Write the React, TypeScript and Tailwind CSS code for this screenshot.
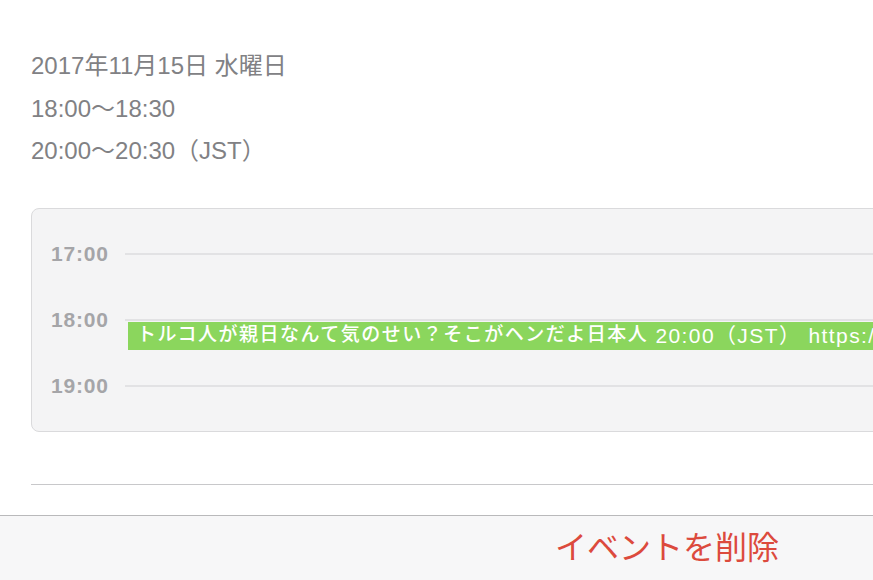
const font = { fontFamily: '"Liberation Sans", "Noto Sans CJK JP", sans-serif' };

const hours = ['17:00', '18:00', '19:00'];

function HourRow({ label }: { label: string }) {
  return (
    <div className="flex h-[66px] items-center">
      <span className="w-[93px] shrink-0 pl-[19px] text-[21px] font-bold tracking-[0.8px] text-[#a5a5a8]">{label}</span>
      <div className="h-[2px] flex-1 bg-[#e2e2e4]" />
    </div>
  );
}

export default function App() {
  return (
    <div className="flex h-[580px] w-[873px] flex-col overflow-hidden bg-white" style={font}>
      <div className="flex-1 pl-[31px]">
        <div className="pt-[45px] text-[24px] leading-[42.5px] text-[#818184]">
          <p>2017年11月15日 水曜日</p>
          <p>18:00〜18:30</p>
          <p>20:00〜20:30（JST）</p>
        </div>

        <div className="relative mt-[35px] w-[900px] rounded-[8px] border border-[#dadadc] bg-[#f4f4f5] py-[12px]">
          {hours.map((h) => (
            <HourRow key={h} label={h} />
          ))}
          <div className="absolute left-[96px] right-0 top-[113px] flex h-[28px] items-center whitespace-nowrap bg-[#8bd65d] pl-[9px] text-white">
            <span className="text-[19px] font-medium tracking-[1.5px]">トルコ人が親日なんて気のせい？そこがヘンだよ日本人</span>
            <span className="text-[21px] tracking-[1.4px]">&nbsp;20:00（JST）&nbsp;https://</span>
          </div>
        </div>

        <div className="mt-[52px] h-px bg-[#c8c8ca]" />
      </div>

      <div className="flex h-[65px] items-center border-t border-[#b9b9bb] bg-[#f7f7f8] pl-[555px]">
        <button type="button" className="text-[32px] text-[#dc4a3d]">イベントを削除</button>
      </div>
    </div>
  );
}
